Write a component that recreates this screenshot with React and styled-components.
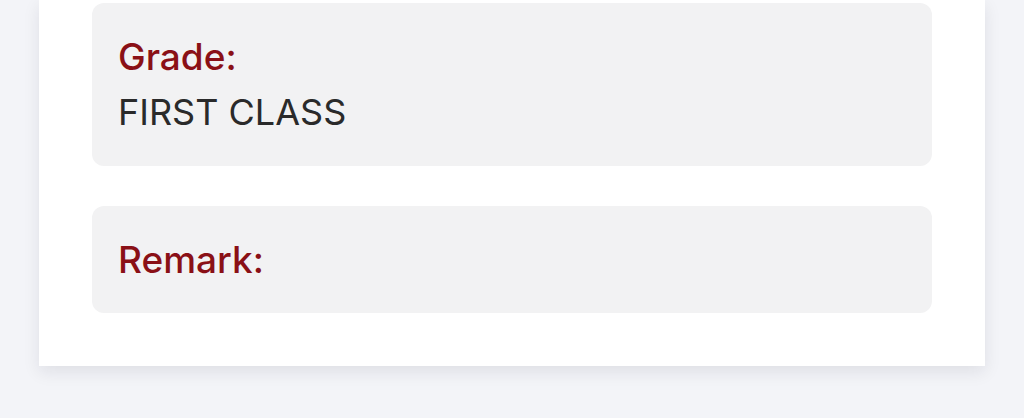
import styled, { createGlobalStyle } from 'styled-components';

const GlobalStyle = createGlobalStyle`
  html, body {
    margin: 0;
    padding: 0;
    background: #f3f4f8;
    font-family: Inter, "Liberation Sans", sans-serif;
  }
`;

const Page = styled.div`
  min-height: 418px;
  padding: 0 39px;
  box-sizing: border-box;
`;

const Card = styled.section`
  background: #ffffff;
  box-shadow: 0 6px 16px rgba(20, 24, 40, 0.09);
  padding: 3px 53px 53px;
  display: flex;
  flex-direction: column;
  gap: 40px;
`;

const Field = styled.div`
  background: #f2f2f3;
  border-radius: 12px;
  padding: 27px 26px 26px;
`;

const Label = styled.div`
  color: #8a1016;
  font-weight: 500;
  font-size: 37px;
  line-height: 54px;
`;

const Value = styled.div`
  color: #2a2a2a;
  font-size: 36px;
  line-height: 56px;
`;

const fields = [
  { label: 'Grade:', value: 'FIRST CLASS' },
  { label: 'Remark:', value: '' },
];

const App = () => {
  return (
    <>
      <GlobalStyle />
      <Page>
        <Card>
          {fields.map((f) => (
            <Field key={f.label}>
              <Label>{f.label}</Label>
              {f.value && <Value>{f.value}</Value>}
            </Field>
          ))}
        </Card>
      </Page>
    </>
  );
};

export default App;
